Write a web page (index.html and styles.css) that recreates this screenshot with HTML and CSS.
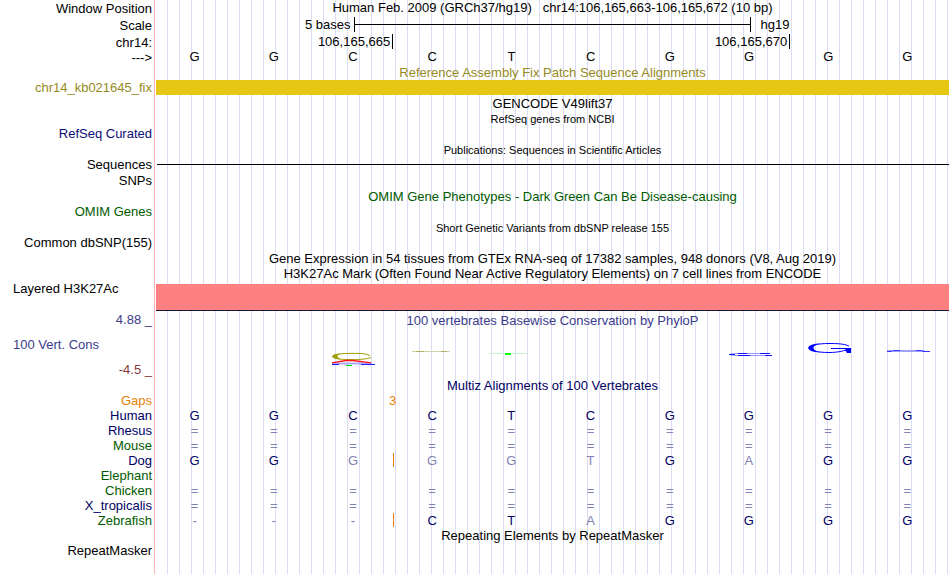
FILE: index.html
```html
<!DOCTYPE html>
<html lang="en">
<head>
    <meta charset="UTF-8">
    <title>Human chr14:106,165,663-106,165,672</title>
    <link rel="stylesheet" href="styles.css">
</head>
<body>
    <main class="browser">
        <!-- Position and ruler -->
        <div class="row">
            <div class="label ruler-label">Window Position</div>
            <div class="title">Human Feb. 2009 (GRCh37/hg19) &nbsp; chr14:106,165,663-106,165,672 (10 bp)</div>
        </div>
        <div class="row ruler-row">
            <div class="label ruler-label">Scale</div>
            <div class="scale">
                <span class="scale-size">5 bases</span>
                <span class="scale-bar"></span>
                <span class="scale-db">hg19</span>
            </div>
        </div>
        <div class="row ruler-row">
            <div class="label ruler-label">chr14:</div>
            <div class="ruler">
                <span class="tick">106,165,665</span>
                <span class="tick">106,165,670</span>
            </div>
        </div>
        <div class="row bases-row">
            <div class="label ruler-label">---&gt;</div>
            <div class="bases">
                <span>G</span><span>G</span><span>C</span><span>C</span><span>T</span>
                <span>C</span><span>G</span><span>G</span><span>G</span><span>G</span>
            </div>
        </div>

        <!-- Fix patches -->
        <div class="row">
            <div class="title olive">Reference Assembly Fix Patch Sequence Alignments</div>
        </div>
        <div class="row">
            <div class="label olive">chr14_kb021645_fix</div>
            <div class="bar patch"></div>
        </div>

        <!-- Genes and variants -->
        <div class="row spaced">
            <div class="title">GENCODE V49lift37</div>
        </div>
        <div class="row">
            <div class="title small">RefSeq genes from NCBI</div>
        </div>
        <div class="row">
            <div class="label blue">RefSeq Curated</div>
        </div>
        <div class="row spaced">
            <div class="title small">Publications: Sequences in Scientific Articles</div>
        </div>
        <div class="row">
            <div class="label">Sequences</div>
            <div class="sequence-line"></div>
        </div>
        <div class="row spaced">
            <div class="label">SNPs</div>
        </div>
        <div class="row spaced">
            <div class="title green">OMIM Gene Phenotypes - Dark Green Can Be Disease-causing</div>
        </div>
        <div class="row">
            <div class="label green">OMIM Genes</div>
        </div>
        <div class="row spaced">
            <div class="title small">Short Genetic Variants from dbSNP release 155</div>
        </div>
        <div class="row">
            <div class="label">Common dbSNP(155)</div>
        </div>
        <div class="row spaced">
            <div class="title">Gene Expression in 54 tissues from GTEx RNA-seq of 17382 samples, 948 donors (V8, Aug 2019)</div>
        </div>
        <div class="row">
            <div class="title">H3K27Ac Mark (Often Found Near Active Regulatory Elements) on 7 cell lines from ENCODE</div>
        </div>
        <div class="row">
            <div class="label label-left">Layered H3K27Ac</div>
            <div class="bar h3k27ac"></div>
        </div>

        <!-- Conservation -->
        <div class="row conservation">
            <div class="axis">
                <div class="label indigo">4.88 _</div>
                <div class="label label-left indigo">100 Vert. Cons</div>
                <div class="label maroon">-4.5 _</div>
            </div>
            <div class="phylop">
                <div class="title indigo">100 vertebrates Basewise Conservation by PhyloP</div>
                <svg class="logo" viewBox="155 330 795 40" preserveAspectRatio="none" fill="none" aria-hidden="true">
                    <path d="M370 355.5C365 353 357 353.4 351 353.4C327 353.4 327 359.6 351 359.6C360 359.6 367 359.2 371 357.3" stroke="#a0a000"/>
                    <path d="M332 356.5Q333 353.5 341 353.5Q337 355 337.5 356.5Q338 358.5 341 359.5Q333 359 332 356.5Z" fill="#a0a000"/>
                    <path d="M332 363.5H372" stroke="#a9a9ff" stroke-width="2"/>
                    <path d="M332 364.5H339M361 364.5H375" stroke="#2020ff"/>
                    <path d="M332 362.8L346 360.5H353L371 362.8" stroke="#ff1818" stroke-width="1.3"/>
                    <path d="M346 365.5H352" stroke="#00e800"/>
                    <path d="M412 351.5H450" stroke="#d2d2aa"/>
                    <path d="M416 351.5H424M441 351.5H447" stroke="#b0b060"/>
                    <path d="M489 353.5H527" stroke="#c5f5d0"/>
                    <path d="M505 354H511" stroke="#00ff00" stroke-width="2"/>
                    <path d="M770 353.5H735Q724 354.5 735 355.5H772" stroke="#9494ff"/>
                    <path d="M729 354.5H735M738 353.5H747M760 353.5H770M738 355.5H750M765 355.5H772" stroke="#1010ff"/>
                    <path d="M849 346C844 343.5 836 343.5 829 343.5C804 343.5 804 352.5 829 352.5C839 352.5 845 350.5 848 349" stroke="#0000ff"/>
                    <path d="M808 348Q809 343.5 821 343.5Q813 345 813.5 348Q814 351 821 352.5Q809 352 808 348Z" fill="#0000ff"/>
                    <path d="M831 348.5H851" stroke="#0000ff"/>
                    <path d="M847 348H851V353H847L845 350Z" fill="#0000ff"/>
                    <path d="M887 350.5H925M887 351.5H930" stroke="#a0a0ff"/>
                    <path d="M887 351.5H892M893 350.5H900M916 350.5H922M922 351.5H930" stroke="#3838ff"/>
                </svg>
            </div>
        </div>

        <!-- Multiz -->
        <div class="row">
            <div class="title navy">Multiz Alignments of 100 Vertebrates</div>
        </div>
        <table class="multiz">
            <tr class="gaps">
                <th scope="row">Gaps</th>
                <td colspan="2"></td><td colspan="2">3</td><td colspan="6"></td>
            </tr>
            <tr>
                <th scope="row">Human</th>
                <td>G</td><td>G</td><td>C</td><td>C</td><td>T</td><td>C</td><td>G</td><td>G</td><td>G</td><td>G</td>
            </tr>
            <tr class="faded">
                <th scope="row">Rhesus</th>
                <td>=</td><td>=</td><td>=</td><td>=</td><td>=</td><td>=</td><td>=</td><td>=</td><td>=</td><td>=</td>
            </tr>
            <tr class="faded">
                <th scope="row" class="green">Mouse</th>
                <td>=</td><td>=</td><td>=</td><td>=</td><td>=</td><td>=</td><td>=</td><td>=</td><td>=</td><td>=</td>
            </tr>
            <tr>
                <th scope="row">Dog</th>
                <td>G</td><td>G</td><td class="diff">G</td><td class="diff insert">G</td><td class="diff">G</td><td class="diff">T</td><td>G</td><td class="diff">A</td><td>G</td><td>G</td>
            </tr>
            <tr>
                <th scope="row" class="green">Elephant</th>
                <td></td><td></td><td></td><td></td><td></td><td></td><td></td><td></td><td></td><td></td>
            </tr>
            <tr class="faded">
                <th scope="row" class="green">Chicken</th>
                <td>=</td><td>=</td><td>=</td><td>=</td><td>=</td><td>=</td><td>=</td><td>=</td><td>=</td><td>=</td>
            </tr>
            <tr class="faded">
                <th scope="row">X_tropicalis</th>
                <td>=</td><td>=</td><td>=</td><td>=</td><td>=</td><td>=</td><td>=</td><td>=</td><td>=</td><td>=</td>
            </tr>
            <tr>
                <th scope="row" class="green">Zebrafish</th>
                <td class="diff">-</td><td class="diff">-</td><td class="diff">-</td><td class="insert">C</td><td>T</td><td class="diff">A</td><td>G</td><td>G</td><td>G</td><td>G</td>
            </tr>
        </table>

        <!-- Repeats -->
        <div class="row">
            <div class="title">Repeating Elements by RepeatMasker</div>
        </div>
        <div class="row">
            <div class="label">RepeatMasker</div>
        </div>
    </main>
</body>
</html>
```

FILE: styles.css
```css
* {
    box-sizing: border-box;
}

body {
    margin: 0;
    background: #fff;
    color: #000;
    font-family: "Liberation Sans", Arial, Helvetica, sans-serif;
    font-size: 13px;
    line-height: 15px;
}

/* red divider, blank label column, then guide lines every 12px */
.browser {
    min-height: 100vh;
    background:
        linear-gradient(#ffb4b4, #ffb4b4) 154px 0 / 1px 100% no-repeat,
        linear-gradient(#fff, #fff) 0 0 / 156px 100% no-repeat,
        linear-gradient(to right, #dcdcf5 1px, transparent 1px) 11px 0 / 12px 100%;
}

.row {
    display: grid;
    grid-template-columns: 155px 1fr;
    min-height: 15px;
}

.row.spaced {
    padding-top: 1px;
}

.label {
    grid-column: 1;
    padding-right: 3px;
    text-align: right;
    white-space: nowrap;
}

.label-left {
    padding-left: 13px;
    text-align: left;
}

.title {
    grid-column: 2;
    text-align: center;
    white-space: nowrap;
}

.small {
    padding-top: 2px;
    font-size: 11px;
    line-height: 13px;
}

.olive { color: #968a1e; }
.blue { color: #0c0c78; }
.navy { color: #000064; }
.green { color: #005a00; }
.indigo { color: #3c3c8c; }
.maroon { color: #823c3c; }

/* Ruler */
.ruler-row {
    padding-top: 2px;
}

.ruler-label {
    padding-top: 2px;
    line-height: 13px;
}

.bases-row {
    padding-bottom: 1px;
}

.scale,
.ruler {
    display: grid;
    margin-right: 1px;
}

.scale {
    grid-template-columns: 1fr 2fr 1fr;
}

.scale-size {
    padding-right: 3px;
    text-align: right;
}

.scale-bar {
    border: solid #000;
    border-width: 0 1px;
    background: linear-gradient(#000, #000) 0 50% / 100% 1px no-repeat;
}

.scale-db {
    padding-left: 10px;
}

.ruler {
    grid-template-columns: 3fr 5fr 2fr;
}

.tick {
    padding-right: 2px;
    border-right: 1px solid #000;
    text-align: right;
}

.bases {
    display: grid;
    grid-template-columns: repeat(10, 1fr);
    margin-right: 3px;
    text-align: center;
}

/* Items */
.bar {
    margin: 0 1px;
}

.patch {
    background: #e6c814;
}

.sequence-line {
    height: 1px;
    margin: 0 1px 0 2px;
    align-self: center;
    background: #000;
}

.h3k27ac {
    height: 27px;
    margin-top: 3px;
    background: #ff8080;
    border-bottom: 1px solid #14143c;
}

/* Conservation */
.conservation {
    height: 67px;
}

.axis {
    display: flex;
    flex-direction: column;
    justify-content: space-between;
    padding: 1px 0;
}

.phylop {
    padding-top: 2px;
}

.logo {
    display: block;
    width: 100%;
    height: 40px;
    margin-top: 2px;
}

/* Multiz */
.multiz {
    width: calc(100% - 3px);
    border-collapse: collapse;
    table-layout: fixed;
    color: #000064;
}

.multiz th {
    width: 155px;
    padding: 0 3px 0 0;
    font-weight: normal;
    text-align: right;
}

.multiz td {
    height: 15px;
    padding: 0;
    text-align: center;
}

.multiz .diff,
.multiz .faded td {
    color: #8282b4;
}

.multiz .gaps {
    color: #e68200;
}

.multiz .insert {
    background: linear-gradient(#e68200, #e68200) 0 0 / 1px 14px no-repeat;
}
```
